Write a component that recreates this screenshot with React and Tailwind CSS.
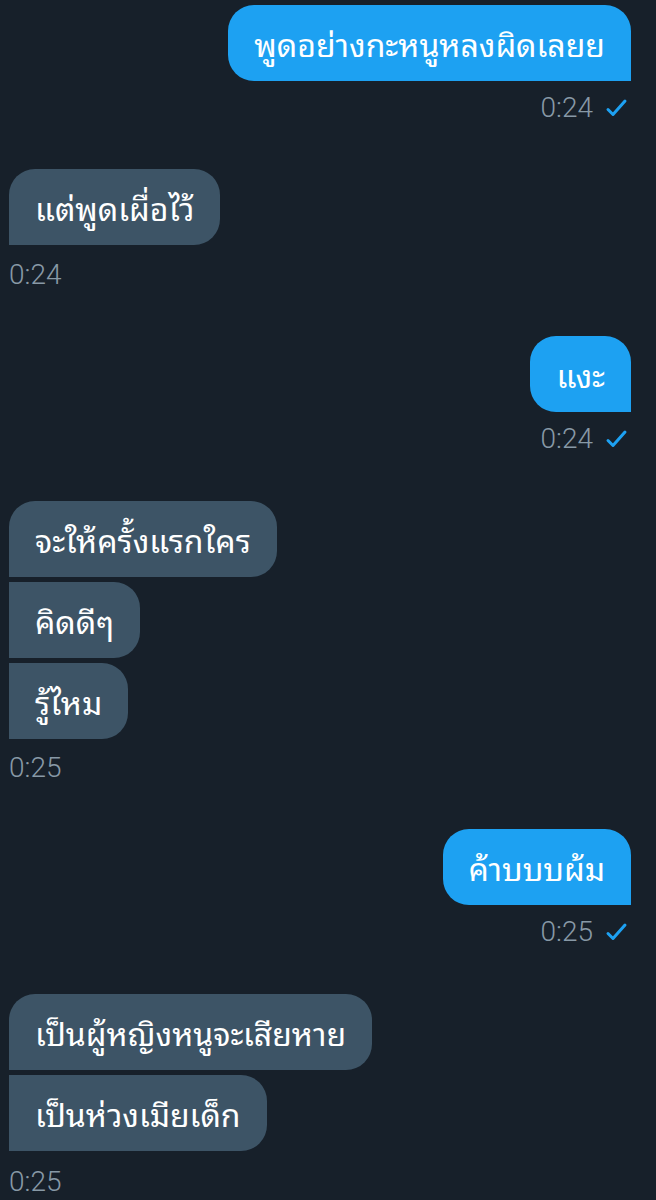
import React from 'react';

const thai = { fontFamily: '"Noto Sans Thai Looped", "Noto Sans Thai", "Noto Sans", "DejaVu Sans", sans-serif' };
const num = { fontFamily: 'Roboto, "Noto Sans", sans-serif' };

function Check() {
  return (
    <svg width="24" height="24" viewBox="0 0 24 24" fill="none" stroke="#1da1f2" strokeWidth="3" strokeLinecap="round" strokeLinejoin="round">
      <path d="M4 13.5l5 5L21 5" />
    </svg>
  );
}

function Sent({ text, time, className }) {
  return (
    <div className={`flex flex-col items-end ${className}`}>
      <div
        className="bg-[#1da1f2] text-white text-[32px] leading-[36px] px-[26px] py-[20px] rounded-[26px] rounded-br-none"
        style={thai}
      >
        {text}
      </div>
      <div className="mt-[11px] h-[32px] flex items-center gap-[11px] pr-[3px]">
        <span className="text-[28px] leading-[32px] font-light text-[#8899a6]" style={num}>{time}</span>
        <Check />
      </div>
    </div>
  );
}

function Received({ lines, time, tsGap, className }) {
  return (
    <div className={`flex flex-col items-start ${className}`}>
      <div className="flex flex-col items-start gap-[5px]">
        {lines.map((t, i) => (
          <div
            key={i}
            className={`bg-[#3d5466] text-white text-[32px] leading-[36px] px-[26px] py-[20px] rounded-r-[26px] ${i === 0 ? 'rounded-tl-[26px]' : ''}`}
            style={thai}
          >
            {t}
          </div>
        ))}
      </div>
      <div className={`${tsGap} h-[32px] flex items-center`}>
        <span className="text-[28px] leading-[32px] font-light text-[#8899a6]" style={num}>{time}</span>
      </div>
    </div>
  );
}

export default function App() {
  return (
    <div className="w-[656px] min-h-[1200px] bg-[#17202a] pl-[9px] pr-[25px] pt-[5px] overflow-hidden">
      <Sent text="พูดอย่างกะหนูหลงผิดเลยย" time="0:24" />
      <Received className="mt-[45px]" tsGap="mt-[14px]" lines={['แต่พูดเผื่อไว้']} time="0:24" />
      <Sent className="mt-[45px]" text="แงะ" time="0:24" />
      <Received
        className="mt-[46px]"
        tsGap="mt-[13px]"
        lines={['จะให้ครั้งแรกใคร', 'คิดดีๆ', 'รู้ไหม']}
        time="0:25"
      />
      <Sent className="mt-[45px]" text="ค้าบบบผ้ม" time="0:25" />
      <Received
        className="mt-[46px]"
        tsGap="mt-[15px]"
        lines={['เป็นผู้หญิงหนูจะเสียหาย', 'เป็นห่วงเมียเด็ก']}
        time="0:25"
      />
    </div>
  );
}
